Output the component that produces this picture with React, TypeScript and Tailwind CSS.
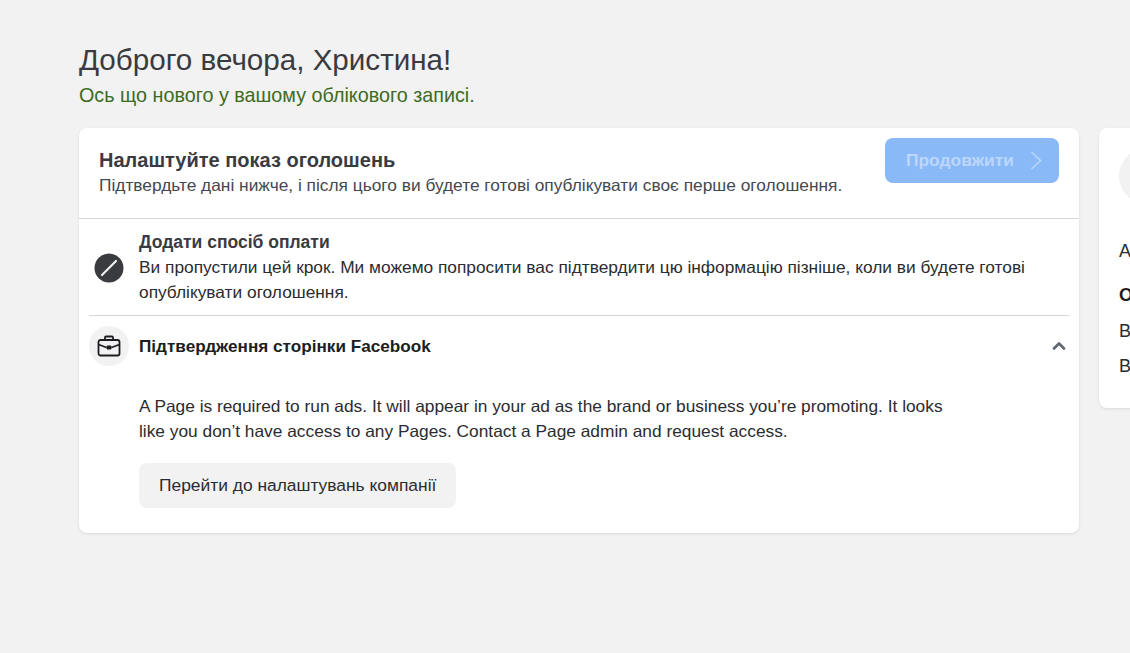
import { ChevronUp } from "lucide-react";

export default function App() {
  return (
    <div className="h-[653px] w-[1130px] overflow-hidden bg-[#f2f2f2] pl-[79px] pt-[42px] font-['Liberation_Sans',Arial,sans-serif]">
      <h1 className="text-[29.6px] leading-[36px] text-[#3a3b3f]">Доброго вечора, Христина!</h1>
      <p className="mt-[5px] text-[19.75px] leading-[24px] text-[#3e6b1f]">Ось що нового у вашому облікового записі.</p>

      <div className="mt-[21px] flex items-start gap-5">
        <div className="w-[1000px] shrink-0 rounded-lg bg-white pb-[25px] shadow-[0_1px_3px_rgba(0,0,0,0.1)]">
          <div className="flex h-[91px] items-start justify-between border-b border-[#d6d7d9] pl-5 pr-5">
            <div className="pt-[20px]">
              <h2 className="text-[20px] font-bold leading-[25px] text-[#3a3b3f]">Налаштуйте показ оголошень</h2>
              <p className="mt-[1px] text-[17.32px] leading-[22px] text-[#444950]">
                Підтвердьте дані нижче, і після цього ви будете готові опублікувати своє перше оголошення.
              </p>
            </div>
            <button className="mt-[10px] flex h-[45px] w-[174px] items-center gap-[16px] rounded-lg bg-[#8ab9f8] pl-[21px] text-[17.4px] font-bold text-[#bcd7fb]">
              Продовжити
              <svg width="12" height="19" viewBox="0 0 12 19" fill="none" stroke="#bcd7fb" strokeWidth="1.6">
                <path d="M1.5 1 10.5 9.5 1.5 18" />
              </svg>
            </button>
          </div>

          <div className="mx-[10px] flex border-b border-[#d6d7d9] pb-[10px] pt-[12px]">
            <div className="flex w-[40px] shrink-0 justify-center pt-[22px]">
              <svg width="30" height="30" viewBox="0 0 30 30">
                <circle cx="15" cy="15" r="14.5" fill="#3a3b3e" />
                <path d="M8 22 22 8" stroke="#f0f0f0" strokeWidth="2.2" strokeLinecap="round" />
              </svg>
            </div>
            <div className="pl-[10px] pr-[30px]">
              <h3 className="mb-[2px] text-[17.5px] font-bold leading-[22px] text-[#3a3b3f]">Додати спосіб оплати</h3>
              <p className="text-[17.32px] leading-[25px] text-[#2b2c30]">
                Ви пропустили цей крок. Ми можемо попросити вас підтвердити цю інформацію пізніше, коли ви будете готові опублікувати оголошення.
              </p>
            </div>
          </div>

          <div className="mx-[10px] flex items-center pt-[10px]">
            <div className="flex h-[40px] w-[40px] shrink-0 items-center justify-center rounded-full bg-[#f2f2f2]">
              <svg width="24" height="22" viewBox="0 0 24 22" fill="none" stroke="#1c1e21" strokeWidth="1.8">
                <rect x="1.5" y="5" width="21" height="15.5" rx="2" />
                <path d="M8 5V2.5A1 1 0 0 1 9 1.5h6a1 1 0 0 1 1 1V5" />
                <path d="M1.5 9.5 9.5 12.5M22.5 9.5 14.5 12.5" />
                <path d="M10 11h4v3h-4z" fill="#1c1e21" strokeWidth="1" />
              </svg>
            </div>
            <h3 className="flex-1 pl-[10px] text-[17.15px] font-bold leading-[22px] text-[#1c1e21]">
              Підтвердження сторінки Facebook
            </h3>
            <ChevronUp className="h-[20px] w-[20px] text-[#606770]" strokeWidth={3.2} />
          </div>

          <div className="pl-[60px] pt-[28px]">
            <p className="w-[830px] text-[17.32px] leading-[25px] text-[#2b2c30]">
              A Page is required to run ads. It will appear in your ad as the brand or business you’re promoting. It looks like you don’t have access to any Pages. Contact a Page admin and request access.
            </p>
            <button className="mt-[19px] h-[45px] rounded-lg bg-[#f2f2f2] px-5 text-[17.4px] text-[#2b2c30]">
              Перейти до налаштувань компанії
            </button>
          </div>
        </div>

        <div className="h-[280px] w-[300px] shrink-0 rounded-lg bg-white pl-5 pt-[20px] shadow-[0_1px_3px_rgba(0,0,0,0.1)]">
          <div className="h-[56px] w-[56px] rounded-full bg-[#f2f2f2]" />
          <p className="mt-[36px] text-[18px] leading-[22px] text-[#2b2c30]">Активність</p>
          <p className="mt-[22px] text-[18px] font-bold leading-[22px] text-[#1c1e21]">Оголошення</p>
          <p className="mt-[14px] text-[18px] leading-[22px] text-[#2b2c30]">Витрати</p>
          <p className="mt-[13px] text-[18px] leading-[22px] text-[#2b2c30]">Виконано</p>
        </div>
      </div>
    </div>
  );
}
